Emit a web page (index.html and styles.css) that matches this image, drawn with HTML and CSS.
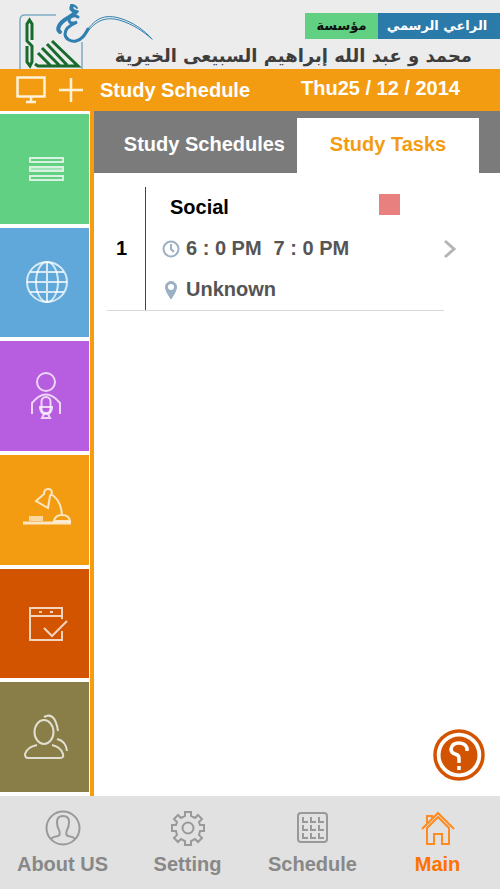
FILE: index.html
```html
<!DOCTYPE html>
<html lang="en">
  <head>
    <meta charset="UTF-8">
    <meta name="viewport" content="width=device-width, initial-scale=1">
    <title>Study Schedule</title>
    <link rel="stylesheet" href="styles.css">
  </head>
  <body>
    <header class="sponsor">
      <svg class="sponsor-logo" viewBox="0 0 118 69" aria-hidden="true">
        <path d="M56 15H25q-5 0-5 5v49M82 42v27" fill="none" stroke="#7fa9c4" stroke-width="1.500"/>
        <g fill="none" stroke="#176b2c" stroke-width="3">
          <path d="M32 40V24l-2.500-4-2.500 4v17l5 5v16l-2 4-3-4V46" stroke-width="3"/>
          <path d="M35 64l3 2h40L52 41M47 44l20 21M42 48l18 18M38 53l13 13"/>
        </g>
        <g fill="none" stroke="#2f7fb0" stroke-linecap="round">
          <path d="M72 6c-2 3 1 5 4 6-3 4-9 5-14 10-4 4-5 8-2 10" stroke-width="4"/>
          <path d="M71 5q4 0 6 3" stroke-width="2"/>
          <path d="M78 17c-4-3-9 0-9 3s4 4 8 2c-7 3-12 7-12 12s6 8 11 7c6-1 9-6 12-12" stroke-width="3"/>
          <path d="M84 35c8-13 17-22 35-17 14 4 25 12 33 21M86 34c8-12 18-18 33-14 14 4 25 12 33 19" stroke-width="1"/>
        </g>
      </svg>
      <div class="sponsor-text" lang="ar" dir="rtl">
        <div class="badges">
          <span class="badge badge-blue">الراعي الرسمي</span>
          <span class="badge badge-green">مؤسسة</span>
        </div>
        <p class="sponsor-name">محمد و عبد الله إبراهيم السبيعى الخيرية</p>
      </div>
    </header>

    <div class="title-bar">
      <button class="icon-button" type="button" aria-label="Display">
        <svg width="30" height="28" viewBox="0 0 30 28"><path d="M1.500 1.500h27v19h-27zM15 21v5M10 26h10" fill="none" stroke="#fff2d8" stroke-width="2.500"/></svg>
      </button>
      <button class="icon-button" type="button" aria-label="Add">
        <svg width="26" height="26" viewBox="0 0 26 26"><path d="M13 1v24M1 13h24" stroke="#fff2d8" stroke-width="2.500"/></svg>
      </button>
      <h1 class="title">Study Schedule</h1>
      <time class="date" datetime="2014-12-25">Thu25 / 12 / 2014</time>
    </div>

    <div class="content">
      <nav class="sidebar">
        <a class="tile tile-green" href="#" aria-label="List">
          <svg width="48" height="48" viewBox="0 0 48 48">
            <path d="M7 13h33v4H7zM7 22h33v4H7zM7 31h33v4H7z"/>
            <path d="M8 24h31" stroke-opacity=".4"/>
          </svg>
        </a>
        <a class="tile tile-blue" href="#" aria-label="Web">
          <svg width="48" height="48" viewBox="0 0 48 48">
            <circle cx="24" cy="23" r="20"/>
            <ellipse cx="24" cy="23" rx="11" ry="20"/>
            <path d="M24 3v40M4 23h40M7 13h34M7 33h34"/>
          </svg>
        </a>
        <a class="tile tile-purple" href="#" aria-label="Speaker">
          <svg width="48" height="48" viewBox="0 0 48 48">
            <circle cx="23" cy="10" r="9"/>
            <path d="M9 42V31q14-17 28 0v11"/>
            <rect x="18.500" y="25" width="9" height="16" rx="4.500"/>
            <path d="M17 34v2q1 5 4 6h4q3-1 4-6v-2M17 35h12M21 42l-2 4h8l-2-4"/>
          </svg>
        </a>
        <a class="tile tile-orange" href="#" aria-label="Study">
          <svg width="50" height="48" viewBox="0 0 50 48">
            <path d="M22 8q0-5 4-5t4 4l-2 3-2 12-12-7zM29 8q10 6 11 21M32 35q1-6 8-6t8 6z"/>
            <path d="M1 37h48" stroke-width="3"/>
            <path d="M7 30h14v5H7z" fill="#fff" fill-opacity=".6" stroke="none"/>
          </svg>
        </a>
        <a class="tile tile-red" href="#" aria-label="Tasks">
          <svg width="48" height="48" viewBox="0 0 48 48">
            <path d="M39 19V8H7v32h32v-9M7 16h32M21 28l8 8 15-15M16 12h3M27 12h3"/>
          </svg>
        </a>
        <a class="tile tile-olive" href="#" aria-label="Contacts">
          <svg width="48" height="48" viewBox="0 0 48 48">
            <ellipse cx="21" cy="19" rx="9.500" ry="12"/>
            <path d="M14 32q-10 2-12 9 0 4 3 4h32q4 0 3-4-2-7-11-9M21 4q11-6 14 14M34 26q9 2 10 12"/>
          </svg>
        </a>
      </nav>

      <main class="panel">
        <div class="tabs" role="tablist">
          <button class="tab" type="button" role="tab" aria-selected="false">Study Schedules</button>
          <button class="tab tab-active" type="button" role="tab" aria-selected="true">Study Tasks</button>
        </div>
        <ul class="tasks">
          <li class="task">
            <div class="task-body">
              <span class="task-number">1</span>
              <div class="task-info">
                <div class="task-line task-heading">
                  <span>Social</span>
                  <span class="task-color"></span>
                </div>
                <div class="task-line">
                  <svg width="18" height="18" viewBox="0 0 18 18" aria-hidden="true"><circle cx="9" cy="9" r="7.500"/><path d="M9 4v5l3 3"/></svg>
                  <span>6 : 0 PM</span>
                  <span class="task-end">7 : 0 PM</span>
                </div>
                <div class="task-line">
                  <svg width="18" height="20" viewBox="0 0 18 20" aria-hidden="true"><path d="M9 19Q3.500 11 3.500 7a5.500 5.500 0 0 1 11 0q0 4-5.500 12z" fill="#9bb0c2" stroke-width="1"/><circle cx="9" cy="7" r="3" fill="#fff" stroke="none"/></svg>
                  <span>Unknown</span>
                </div>
              </div>
            </div>
            <a class="task-open" href="#" aria-label="Open task">
              <svg width="12" height="20" viewBox="0 0 12 20"><path d="M1 2l9 8-9 8" fill="none" stroke="#b5b5b5" stroke-width="3"/></svg>
            </a>
          </li>
        </ul>
        <button class="help" type="button" aria-label="Help">
          <svg width="52" height="52" viewBox="0 0 52 52">
            <circle cx="26" cy="26" r="24" fill="#fff" stroke="#d35400" stroke-width="3.500"/>
            <circle cx="26" cy="26" r="18.500" fill="#d35400"/>
            <path d="M34 22v-3q-2-5-8-5-7 0-8 6 0 4 4 5 4 1 4 4v5M26 37v4" fill="none" stroke="#fff" stroke-width="3.500"/>
          </svg>
        </button>
      </main>
    </div>

    <nav class="bottom-nav">
      <a class="nav-item" href="#">
        <svg width="36" height="36" viewBox="0 0 36 36"><circle cx="18" cy="18" r="16.500"/><path d="M6 29q1-2 7-3 3-1 1-6-2-3-2-8 0-6 6-6t6 6q0 5-2 8-2 5 1 6 6 1 7 3"/></svg>
        About US
      </a>
      <a class="nav-item" href="#">
        <svg width="36" height="36" viewBox="0 0 36 36"><path d="M15 6V2h6v4l4 2 3-3 4 4-3 3 1 3h4v6h-4l-1 4 3 3-4 4-3-3-4 2v4h-6v-4l-4-2-3 3-4-4 3-3-1-4H2v-6h4l1-3-3-3 4-4 3 3z"/><circle cx="18" cy="18" r="5.500"/></svg>
        Setting
      </a>
      <a class="nav-item" href="#">
        <svg width="36" height="36" viewBox="0 0 36 36"><rect x="3" y="3" width="29" height="29" rx="3"/><path d="M8 7v5h5M16 7v5h5M24 7v5h5M8 15v5h5M16 15v5h5M24 15v5h5M8 23v5h5M16 23v5h5M24 23v5h5"/></svg>
        Schedule
      </a>
      <a class="nav-item nav-current" href="#">
        <svg width="36" height="36" viewBox="0 0 36 36"><path d="M2 19L18 3l16 16M7 13V6h5v3M7 18v16h7V24h8v10h7V18L18 7z"/></svg>
        Main
      </a>
    </nav>
  </body>
</html>
```

FILE: styles.css
```css
* {
  box-sizing: border-box;
}
body {
  margin: 0;
  min-height: 100vh;
  display: flex;
  flex-direction: column;
  background-color: #fff;
  font-family: "Liberation Sans", Arial, sans-serif;
  font-size: 20px;
  font-weight: bold;
}
button {
  padding: 0;
  border: none;
  background: none;
  font: inherit;
  cursor: pointer;
}
svg {
  display: block;
}
a {
  text-decoration: none;
}

/* sponsor */
.sponsor {
  display: flex;
  height: 69px;
  background-color: #ececec;
}
.sponsor-logo {
  flex: none;
  width: 114px;
  height: 69px;
  overflow: visible;
}
.sponsor-logo {
  width: 118px;
  margin-right: -4px;
}
.sponsor-text {
  flex: 1;
  padding-top: 13px;
  font-family: "DejaVu Sans", sans-serif;
}
.badges {
  display: flex;
}
.badge {
  flex: none;
  height: 26px;
  line-height: 26px;
  font-size: 13px;
  text-align: center;
}
.badge-blue {
  width: 122px;
  padding-right: 4px;
  background-color: #2a7aaa;
  color: #fff;
}
.badge-green {
  width: 73px;
  background-color: #62d082;
  color: #111;
}
.sponsor-name {
  margin: 0;
  padding-right: 28px;
  line-height: 34px;
  font-size: 18px;
  color: #3d3d3d;
  white-space: nowrap;
}

/* title bar */
.title-bar {
  display: flex;
  align-items: center;
  height: 42px;
  padding: 0 40px 0 16px;
  background-color: #f39c12;
  color: #fff;
}
.icon-button {
  margin-right: 12px;
}
.icon-button + .title {
  margin-left: 4px;
}
.title {
  margin: 0;
  font-size: 20px;
}
.date {
  margin-left: auto;
  padding-bottom: 4px;
}

/* sidebar */
.content {
  flex: 1;
  display: flex;
}
.sidebar {
  flex: none;
  display: flex;
  flex-direction: column;
  gap: 4px;
  width: 94px;
  padding: 3px 0 4px;
  border-right: 4px solid #f89c0e;
}
.tile {
  flex: 1;
  display: flex;
  align-items: center;
  justify-content: center;
  min-height: 64px;
  margin-right: 1px;
}
.tile svg {
  fill: none;
  stroke: #fff;
  stroke-opacity: .75;
  stroke-width: 2;
  margin-left: 4px;
}
.tile-green {
  background-color: #62d082;
}
.tile-blue {
  background-color: #5fa8d9;
}
.tile-purple {
  background-color: #b75de0;
}
.tile-orange {
  background-color: #f39c12;
}
.tile-red {
  background-color: #d35400;
}
.tile-olive {
  background-color: #8a7e48;
}

/* panel */
.panel {
  flex: 1;
  position: relative;
}
.tabs {
  display: flex;
  height: 62px;
  padding: 7px 21px 0 0;
  background-color: #7b7b7b;
}
.tab {
  flex: 1;
  padding: 0 12px 2px 0;
  color: #fff;
  text-align: right;
}
.tab-active {
  flex: none;
  width: 182px;
  padding-right: 0;
  background-color: #fff;
  color: #f39c12;
  text-align: center;
}
.tasks {
  margin: 0;
  padding: 14px 44px 0 13px;
  list-style: none;
}
.task {
  display: flex;
  align-items: center;
}
.task-body {
  flex: 1;
  display: flex;
  align-items: center;
  border-bottom: 1px solid #d8d8d8;
}
.task-number {
  width: 38px;
  padding-left: 9px;
}
.task-info {
  flex: 1;
  padding: 0 44px 0 16px;
  border-left: 1px solid #444;
}
.task-line {
  display: flex;
  align-items: center;
  gap: 6px;
  height: 41px;
  color: #555;
}
.task-line svg {
  fill: none;
  stroke: #9bb0c2;
  stroke-width: 2;
}
.task-heading {
  justify-content: space-between;
  padding-left: 8px;
  color: #000;
}
.task-color {
  width: 21px;
  height: 21px;
  margin-bottom: 6px;
  background-color: #e88080;
}
.task-end {
  margin-left: 6px;
}
.help {
  position: absolute;
  right: 15px;
  bottom: 15px;
}

/* bottom navigation */
.bottom-nav {
  display: flex;
  height: 93px;
  padding-top: 14px;
  background-color: #e1e1e1;
}
.nav-item {
  flex: 1;
  display: flex;
  flex-direction: column;
  align-items: center;
  gap: 7px;
  color: #888;
}
.nav-item svg {
  fill: none;
  stroke: #999;
  stroke-width: 2;
}
.nav-current {
  color: #ff7200;
}
.nav-current svg {
  stroke: #ff8a1f;
}
```
